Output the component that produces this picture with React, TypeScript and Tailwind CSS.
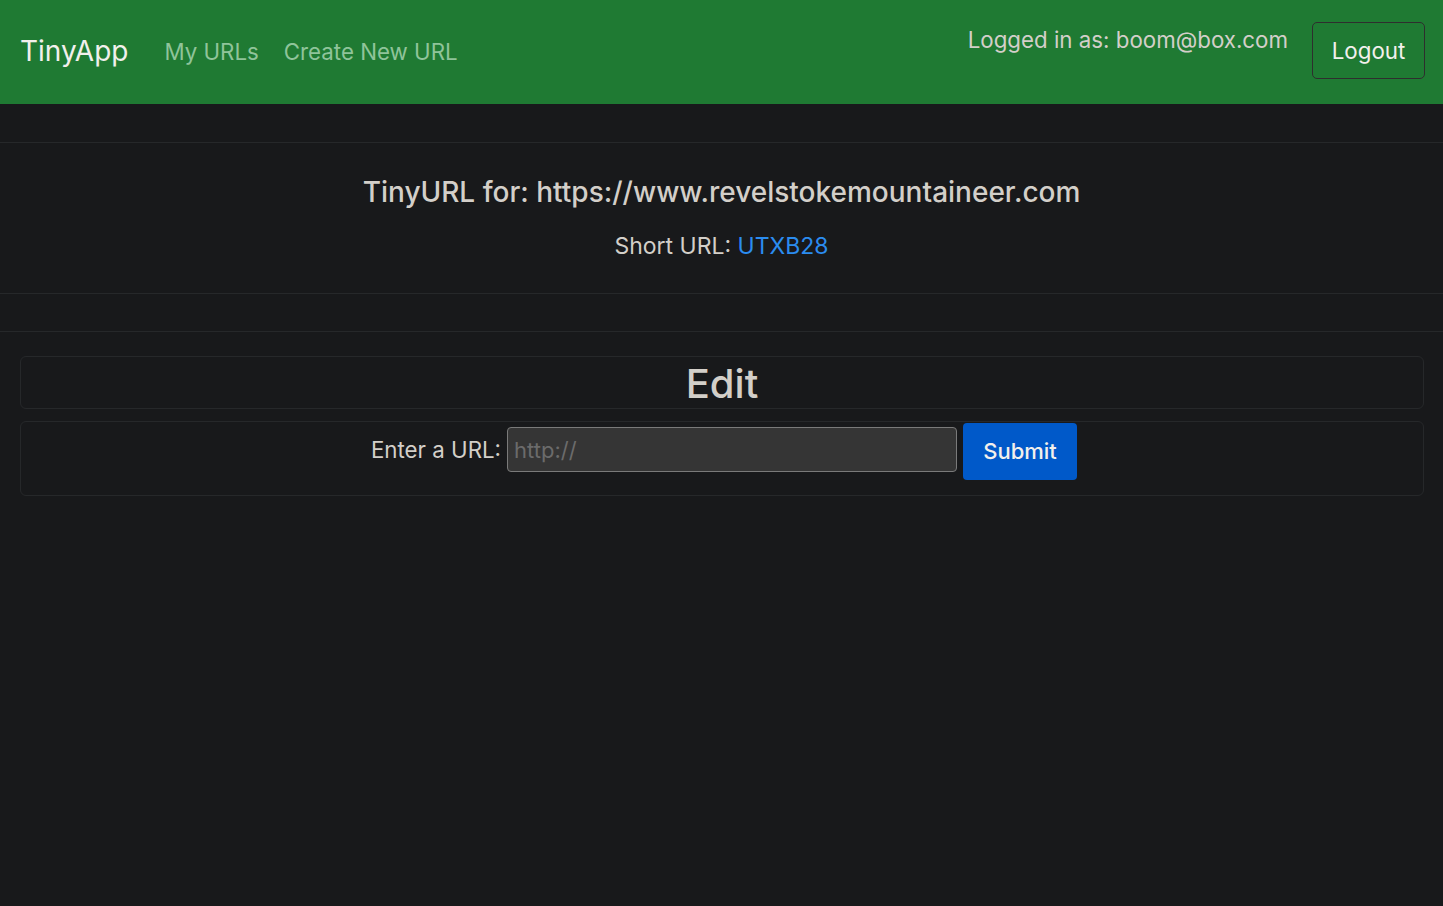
export default function App() {
  return (
    <div className="min-h-screen bg-[#18191b] text-[#d3cfc9]" style={{ fontFamily: "Inter, 'Noto Sans', sans-serif" }}>
      {/* navbar */}
      <nav className="flex items-start justify-between bg-[#1f7a33] h-[104px] pl-5 pr-[18px]">
        <div className="flex items-center h-[104px]">
          <span className="text-[28px] text-[#f2f0ec] mr-[36px] -mt-[2px]">TinyApp</span>
          <a className="text-[22.3px] text-[#8fc49a] mr-[25px]">My URLs</a>
          <a className="text-[22.3px] text-[#8fc49a]">Create New URL</a>
        </div>
        <div className="flex items-start pt-[22px]">
          <span className="text-[22.3px] text-[#d3cfc9] mt-[1px] mr-6">Logged in as: boom@box.com</span>
          <button className="h-[57px] w-[113px] border border-[#2e2e2e] rounded-[5px] text-[22.3px] text-[#f2f0ec]">
            Logout
          </button>
        </div>
      </nav>

      <div className="h-[38px]" />
      <section className="border-y border-[#26282a] h-[152px] flex flex-col items-center pt-[31px]">
        <h3 className="text-[28px] font-medium leading-[36px]">
          TinyURL for: https://www.revelstokemountaineer.com
        </h3>
        <p className="text-[23px] mt-[19px]">
          Short URL: <a className="text-[#2b8cf0]">UTXB28</a>
        </p>
      </section>
      <div className="h-[37px]" />
      <div className="border-t border-[#26282a]" />

      <div className="pl-5 pr-[19px] pt-6">
        <div className="border border-[#26282a] rounded-[6px] h-[53px] flex items-center justify-center">
          <h2 className="text-[40px] font-medium leading-none mt-[2px]">Edit</h2>
        </div>
        <div className="border border-[#26282a] rounded-[6px] h-[75px] mt-[12px] flex items-start justify-center pt-[1px]">
          <form className="flex items-start ml-[4px]">
            <label className="text-[22.3px] mt-[10px] mr-[6px]">Enter a URL:</label>
            <input
              placeholder="http://"
              className="mt-[4px] w-[450px] h-[45px] bg-[#353535] border border-[#7a7a7a] rounded-[4px] px-[6px] text-[22px] placeholder:text-[#6b6b6b] outline-none"
            />
            <button className="ml-[6px] w-[114px] h-[57px] bg-[#0059c9] rounded-[4px] text-[22px] font-medium text-[#f2f0ec]">
              Submit
            </button>
          </form>
        </div>
      </div>
    </div>
  );
}
